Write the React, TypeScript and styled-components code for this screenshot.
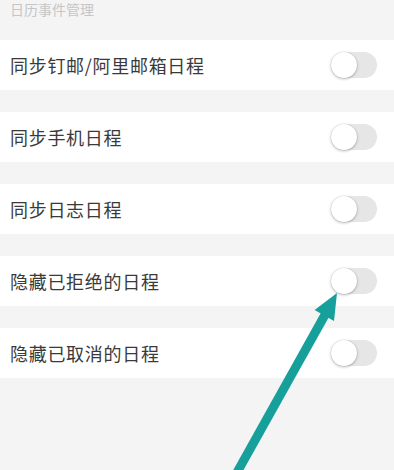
import React from 'react';
import styled, { createGlobalStyle } from 'styled-components';

const GlobalStyle = createGlobalStyle`
  html, body {
    margin: 0;
    padding: 0;
    background: #f4f4f4;
  }
  body {
    font-family: "Noto Sans CJK SC", "Noto Sans", sans-serif;
  }
`;

const Page = styled.div`
  position: relative;
  width: 394px;
  height: 470px;
  overflow: hidden;
  background: #f4f4f4;
`;

const SectionTitle = styled.div`
  height: 40px;
  padding: 1px 10px 0;
  box-sizing: border-box;
  font-size: 14px;
  line-height: 17px;
  color: #c6c6c6;
`;

const List = styled.div`
  display: flex;
  flex-direction: column;
  gap: 22px;
`;

const Row = styled.div`
  height: 50px;
  display: flex;
  align-items: center;
  justify-content: space-between;
  padding: 0 17px 0 10px;
  background: #ffffff;
`;

const Label = styled.span`
  font-size: 18px;
  letter-spacing: 0.7px;
  color: #3a3a3a;
`;

const Track = styled.div<{ $on?: boolean }>`
  position: relative;
  width: 46px;
  height: 26px;
  border-radius: 13px;
  background: ${(p) => (p.$on ? '#1a9a96' : '#e6e6e6')};
`;

const Knob = styled.div<{ $on?: boolean }>`
  position: absolute;
  top: 0;
  left: ${(p) => (p.$on ? '20px' : '0')};
  width: 26px;
  height: 26px;
  border-radius: 50%;
  background: #ffffff;
  box-shadow: 0 1px 3px rgba(0, 0, 0, 0.28), 0 0 0 0.5px rgba(0, 0, 0, 0.08);
`;

const Overlay = styled.svg`
  position: absolute;
  left: 0;
  top: 0;
  pointer-events: none;
`;

const items = [
  '同步钉邮/阿里邮箱日程',
  '同步手机日程',
  '同步日志日程',
  '隐藏已拒绝的日程',
  '隐藏已取消的日程',
];

const Switch: React.FC<{ on?: boolean }> = ({ on }) => (
  <Track $on={on}>
    <Knob $on={on} />
  </Track>
);

export default function App() {
  return (
    <Page>
      <GlobalStyle />
      <SectionTitle>日历事件管理</SectionTitle>
      <List>
        {items.map((t) => (
          <Row key={t}>
            <Label>{t}</Label>
            <Switch />
          </Row>
        ))}
      </List>
      <Overlay width="394" height="470" viewBox="0 0 394 470">
        <line x1="235" y1="476" x2="326" y2="313" stroke="#17a09b" strokeWidth="9" />
        <polygon points="337,293 334,321 314.6,310" fill="#17a09b" />
      </Overlay>
    </Page>
  );
}
